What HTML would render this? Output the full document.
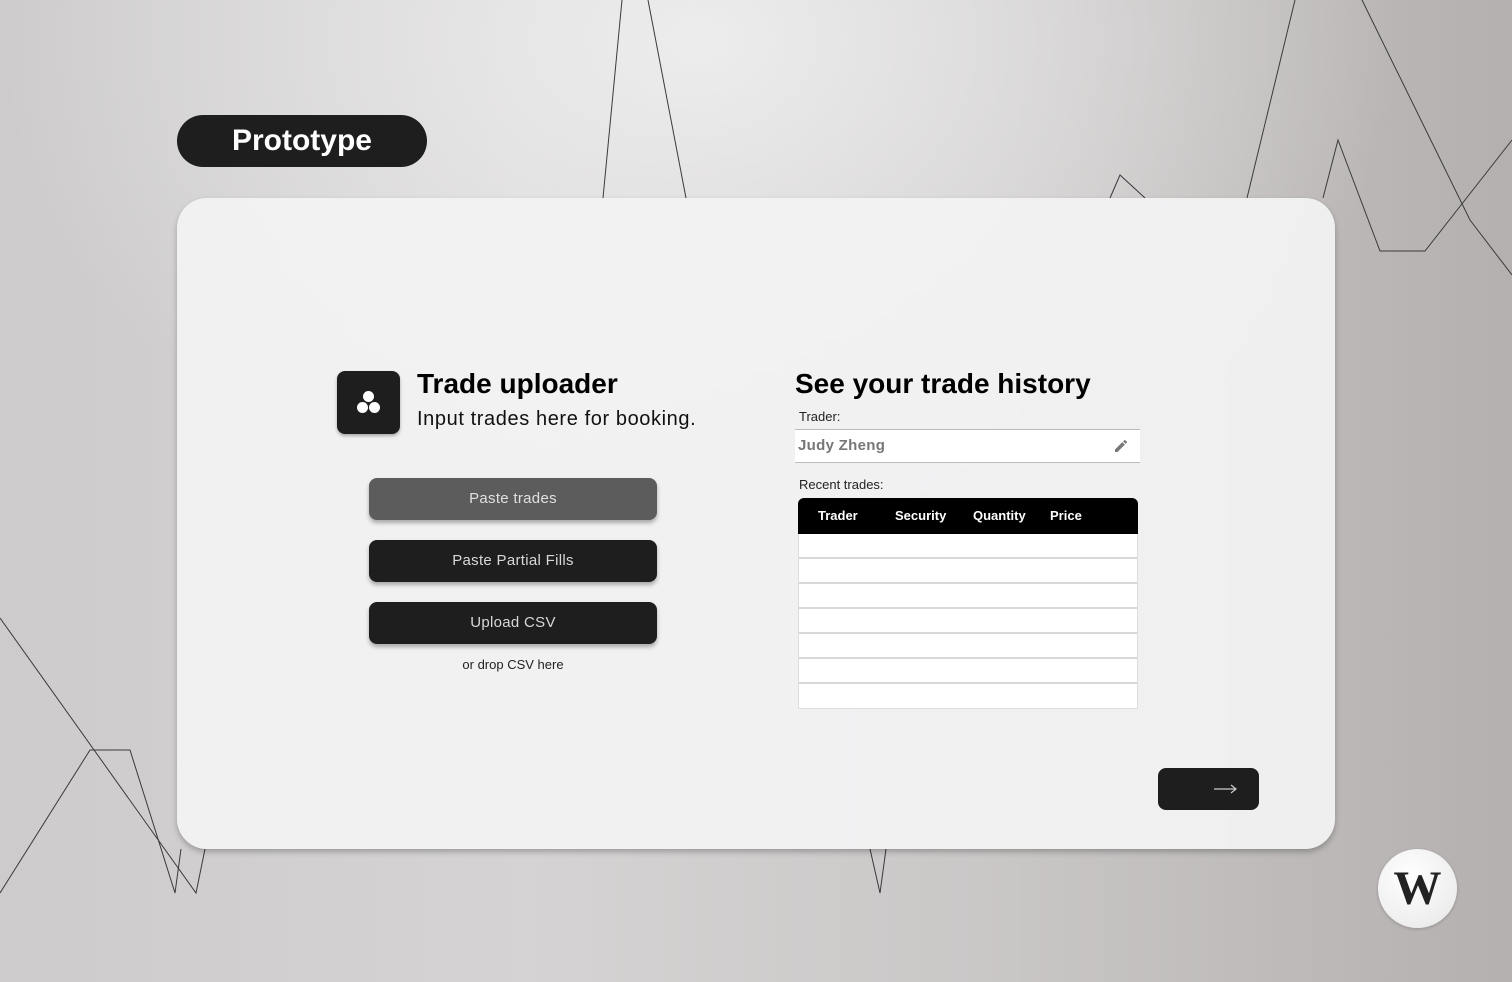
<!DOCTYPE html>
<html><head><meta charset="utf-8">
<style>
*{margin:0;padding:0;box-sizing:border-box}
html,body{width:1512px;height:982px;overflow:hidden}
body{position:relative;font-family:"Liberation Sans","DejaVu Sans",sans-serif;
background:radial-gradient(ellipse 700px 500px at 700px 40px,rgba(240,240,240,0.9) 0%,rgba(240,240,240,0) 100%),
linear-gradient(90deg,#cdcbcb 0%,#d5d3d3 35%,#cac7c7 65%,#b4b0af 100%);}
svg.bg{position:absolute;left:0;top:0}
.pill{position:absolute;left:177px;top:115px;width:250px;height:52px;border-radius:26px;background:#1e1e1e;color:#fff;font-size:30px;font-weight:bold;text-align:center;line-height:52px}
.card{position:absolute;left:177px;top:198px;width:1158px;height:651px;border-radius:30px;background:rgba(243,243,244,0.93);box-shadow:0 3px 6px rgba(0,0,0,0.25)}
.abs{position:absolute}
.icon{left:337px;top:371px;width:63px;height:63px;border-radius:8px;background:#1e1e1e;box-shadow:0 2px 3px rgba(0,0,0,.3)}
.dot{position:absolute;width:11px;height:11px;border-radius:50%;background:#fff}
.btn{position:absolute;left:369px;width:288px;height:42px;border-radius:8px;background:#1e1e1e;color:#d8d8d8;font-size:15px;text-align:center;line-height:42px;box-shadow:0 3px 4px rgba(0,0,0,.3);letter-spacing:0.3px}
</style></head><body>
<svg class="bg" width="1512" height="982">
<g fill="none" stroke="#3a3a3a" stroke-width="1">
<polyline points="622,0 603,198"/>
<polyline points="648,0 686,198"/>
<polyline points="1295,0 1247,198"/>
<polyline points="1362,0 1470,220 1512,275"/>
<polyline points="1110,198 1120,175 1145,198"/>
<polyline points="1323,198 1338,140 1380,251 1425,251 1512,140"/>
<polyline points="0,618 196,893 205,849"/>
<polyline points="0,893 90,750 130,750 175,893 181,849"/>
<polyline points="870,849 880,893 886,849"/>
</g>
</svg>
<div class="pill">Prototype</div>
<div class="card"></div>
<div class="abs icon"><div class="dot" style="left:26px;top:20px"></div><div class="dot" style="left:20px;top:31px"></div><div class="dot" style="left:32px;top:31px"></div></div>
<div class="abs" style="left:417px;top:368px;font-size:28px;font-weight:bold;color:#000">Trade uploader</div>
<div class="abs" style="left:417px;top:408px;font-size:20px;color:#111;letter-spacing:0.6px">Input trades here for booking.</div>
<div class="btn" style="top:478px;background:#5c5c5c;color:#e0e0e0">Paste trades</div>
<div class="btn" style="top:540px">Paste Partial Fills</div>
<div class="btn" style="top:602px">Upload CSV</div>
<div class="abs" style="left:369px;width:288px;top:657px;text-align:center;font-size:13px;color:#222">or drop CSV here</div>

<div class="abs" style="left:795px;top:368px;font-size:28px;font-weight:bold;color:#000">See your trade history</div>
<div class="abs" style="left:799px;top:409px;font-size:13px;color:#222">Trader:</div>
<div class="abs" style="left:795px;top:429px;width:345px;height:34px;background:#fff;border-top:1px solid #bbb;border-bottom:1px solid #bbb"></div>
<div class="abs" style="left:798px;top:437px;font-size:15px;font-weight:bold;color:#777;letter-spacing:0.3px">Judy Zheng</div>
<svg class="abs" style="left:1113px;top:438px" width="16" height="16" viewBox="0 0 24 24"><path fill="#777" d="M3 17.25V21h3.75L17.81 9.94l-3.75-3.75L3 17.25zM20.71 7.04a1 1 0 0 0 0-1.41l-2.34-2.34a1 1 0 0 0-1.41 0l-1.83 1.83 3.75 3.75 1.83-1.83z"/></svg>
<div class="abs" style="left:799px;top:477px;font-size:13px;color:#222">Recent trades:</div>
<div class="abs" style="left:798px;top:498px;width:340px;height:36px;background:#000;border-radius:6px 6px 0 0;color:#fff;font-size:13px;font-weight:bold;line-height:36px">
<span class="abs" style="left:20px">Trader</span><span class="abs" style="left:97px">Security</span><span class="abs" style="left:175px">Quantity</span><span class="abs" style="left:252px">Price</span></div>
<div class="abs" style="left:798px;top:534px;width:340px;height:175px;background:#fff;border:1px solid #ddd;border-top:none">
<div style="height:25px;border-bottom:2px solid #d8d8d8"></div>
<div style="height:25px;border-bottom:2px solid #d8d8d8"></div>
<div style="height:25px;border-bottom:2px solid #d8d8d8"></div>
<div style="height:25px;border-bottom:2px solid #d8d8d8"></div>
<div style="height:25px;border-bottom:2px solid #d8d8d8"></div>
<div style="height:25px;border-bottom:2px solid #d8d8d8"></div>
</div>
<div class="abs" style="left:1158px;top:768px;width:101px;height:42px;border-radius:8px;background:#1e1e1e"></div>
<svg class="abs" style="left:1212px;top:782px" width="28" height="14"><path d="M2 7H24M19 3L24 7L19 11" stroke="#ccc" stroke-width="1.2" fill="none"/></svg>
<div class="abs" style="left:1378px;top:849px;width:79px;height:79px;border-radius:50%;background:radial-gradient(circle at 40% 35%,#fff,#eee 70%,#ddd);box-shadow:0 1px 3px rgba(0,0,0,.2);text-align:center;font-family:'Liberation Serif',serif;font-weight:bold;font-size:48px;line-height:79px;color:#222">W</div>
</body></html>
